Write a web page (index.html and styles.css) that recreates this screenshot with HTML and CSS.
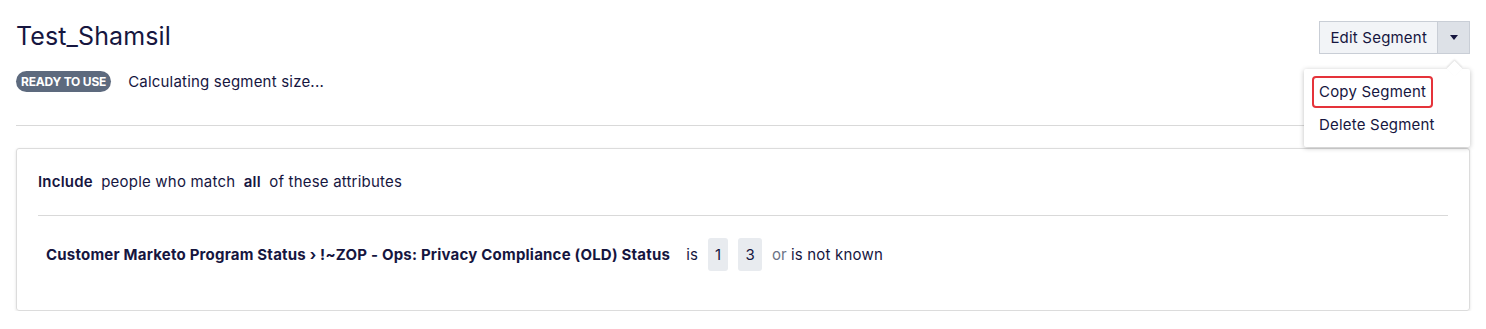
FILE: index.html
```html
<!DOCTYPE html>
<html lang="en">
<head>
    <meta charset="UTF-8">
    <title>Test_Shamsil</title>
    <link rel="stylesheet" href="styles.css">
</head>
<body>
    <div class="page">
        <!-- Segment header -->
        <header class="seg-header">
            <div class="seg-info">
                <h1>Test_Shamsil</h1>
                <div class="seg-status">
                    <span class="badge">Ready to use</span>
                    <span class="size">Calculating segment size...</span>
                </div>
            </div>
            <div class="btn-group">
                <button class="btn">Edit Segment</button>
                <button class="btn btn-toggle"><span class="caret"></span></button>
                <div class="menu">
                    <a class="menu-item active">Copy Segment</a>
                    <a class="menu-item">Delete Segment</a>
                </div>
            </div>
        </header>

        <hr class="divider">

        <!-- Rules card -->
        <section class="card">
            <p class="rule-intro"><b>Include</b> people who match <b>all</b> of these attributes</p>
            <hr class="card-line">
            <div class="condition">
                <b>Customer Marketo Program Status › !~ZOP - Ops: Privacy Compliance (OLD) Status</b>
                <span class="op">is</span>
                <span class="chip">1</span>
                <span class="chip">3</span>
                <span class="muted">or</span><span class="plain">is not known</span>
            </div>
        </section>
    </div>
</body>
</html>
```

FILE: styles.css
```css
body {
    font-family: Inter, 'Noto Sans', sans-serif;
    margin: 0;
    padding: 0;
    background: #fff;
    color: #16163f;
    letter-spacing: 0.2px;
}

.page {
    padding: 0 16px;
}

/* Header */
.seg-header {
    display: flex;
    justify-content: space-between;
    align-items: flex-start;
    padding-top: 21px;
}

h1 {
    font-size: 25px;
    font-weight: 400;
    line-height: 30px;
    margin: 0;
    letter-spacing: 0.1px;
}

.seg-status {
    display: flex;
    align-items: center;
    gap: 17px;
    margin-top: 20px;
    font-size: 15px;
}

.badge {
    background: #5d6a7e;
    color: #fff;
    font-size: 12px;
    font-weight: 700;
    text-transform: uppercase;
    height: 21px;
    line-height: 21px;
    padding: 0 5px;
    border-radius: 11px;
    letter-spacing: -0.2px;
}

/* Button group + menu */
.btn-group {
    position: relative;
    display: flex;
}

.btn {
    font-family: inherit;
    font-size: 15px;
    letter-spacing: 0.2px;
    color: #16163f;
    background: #f2f4f7;
    border: 1px solid #c9ced6;
    height: 33px;
    padding: 0 10px;
    cursor: pointer;
}

.btn-toggle {
    width: 32px;
    padding: 0;
    background: #dde1e7;
    border-left: none;
    display: flex;
    align-items: center;
    justify-content: center;
}

.caret {
    width: 0;
    height: 0;
    border-left: 4px solid transparent;
    border-right: 4px solid transparent;
    border-top: 5px solid #16163f;
}

.menu {
    position: absolute;
    top: 48px;
    right: 0;
    width: 150px;
    padding: 7px 8px 6px;
    background: #fff;
    border-radius: 2px;
    box-shadow: 0 1px 5px rgba(0, 0, 0, 0.25);
    z-index: 2;
}

.menu::before {
    content: '';
    position: absolute;
    top: -6px;
    right: 10px;
    width: 11px;
    height: 11px;
    background: #fff;
    transform: rotate(45deg);
    box-shadow: -1px -1px 2px rgba(0, 0, 0, 0.12);
}

.menu-item {
    position: relative;
    display: block;
    font-size: 15px;
    line-height: 28px;
    padding: 0 5px;
    border: 2px solid transparent;
    border-radius: 4px;
    margin-bottom: 1px;
    white-space: nowrap;
}

.menu-item:last-child {
    margin-bottom: 0;
}

.menu-item.active {
    border-color: #e5333a;
    width: fit-content;
}

.divider {
    border: none;
    border-top: 1px solid #d9d9d9;
    margin: 33px 0 22px;
}

/* Card */
.card {
    border: 1px solid #dcdcdc;
    border-radius: 3px;
    box-shadow: 0 1px 3px rgba(0, 0, 0, 0.12);
    padding: 23px 21px 39px;
    font-size: 15px;
}

.rule-intro {
    margin: 0;
    line-height: 20px;
}

.rule-intro b {
    font-weight: 600;
    margin: 0 4px 0 0;
}

.rule-intro b:not(:first-child) {
    margin: 0 4px;
}

.card-line {
    border: none;
    border-top: 1px solid #d9d9d9;
    margin: 23px 0 22px;
}

.condition {
    display: flex;
    align-items: center;
    gap: 10px;
    padding-left: 8px;
}

.condition b {
    font-weight: 700;
    letter-spacing: 0.21px;
    margin-right: 6px;
}

.chip {
    background: #e8ebef;
    border-radius: 3px;
    height: 33px;
    line-height: 33px;
    padding: 0 7px;
}

.muted {
    color: #6b7386;
}

.plain {
    margin-left: -6px;
}
```
